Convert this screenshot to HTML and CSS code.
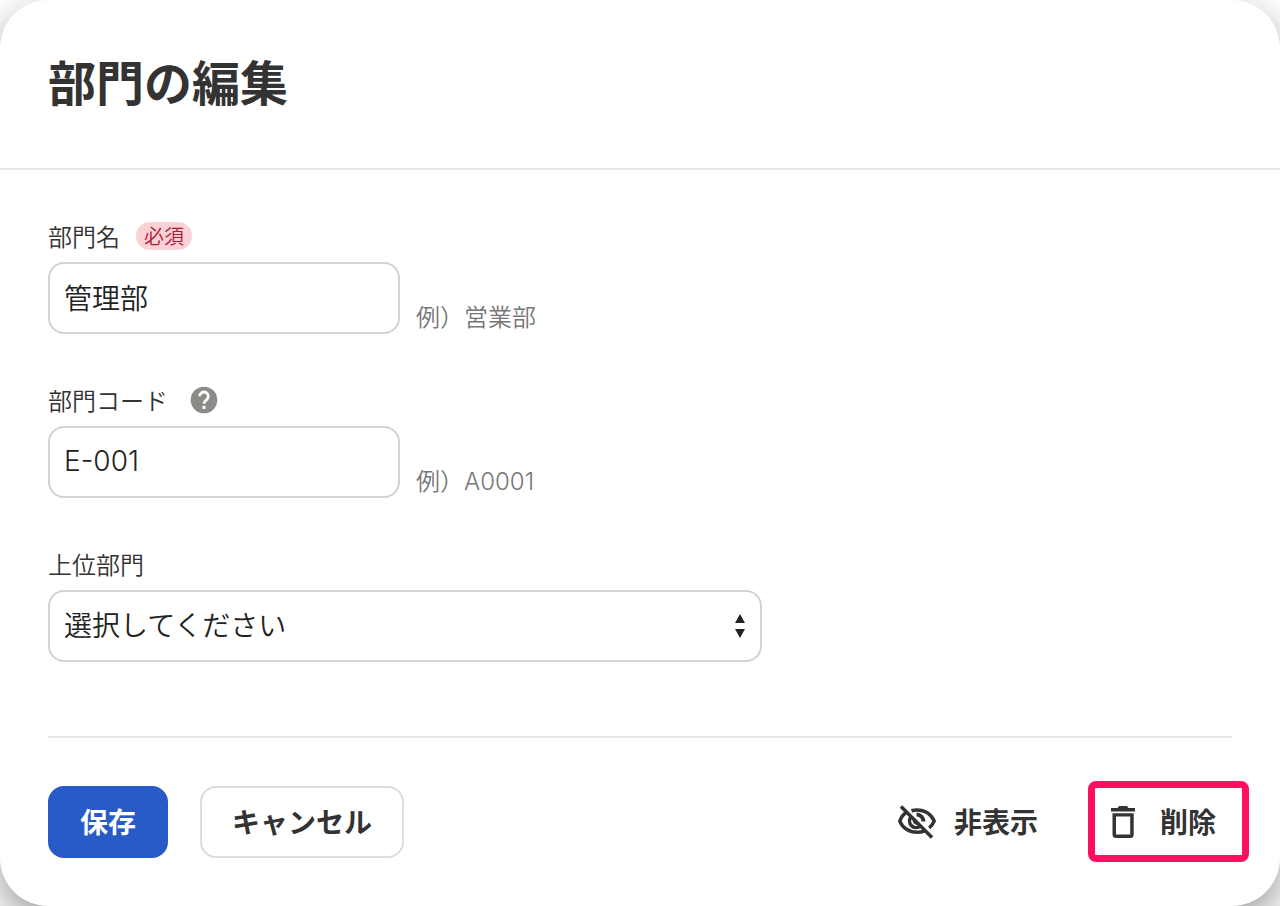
FILE: index.html
```html
<!DOCTYPE html>
<html lang="ja">
<head>
    <meta charset="UTF-8">
    <meta name="viewport" content="width=device-width, initial-scale=1.0">
    <title>部門の編集</title>
    <link rel="stylesheet" href="styles.css">
</head>
<body>

    <div class="dialog">
        <div class="dialog-header">
            <h1>部門の編集</h1>
        </div>

        <form class="dialog-body">
            <div class="field">
                <div class="field-label">
                    <label for="name">部門名</label>
                    <span class="required">必須</span>
                </div>
                <div class="field-row">
                    <input class="control" type="text" id="name" value="管理部">
                    <span class="example">例）営業部</span>
                </div>
            </div>

            <div class="field">
                <div class="field-label">
                    <label for="code">部門コード</label>
                    <button type="button" class="help" aria-label="ヘルプ">
                        <svg width="28" height="28" viewBox="0 0 28 28">
                            <circle cx="14" cy="14" r="13.3" fill="#8c8b88"/>
                            <path d="M9.700 10.300a4.300 4.300 0 1 1 7.200 3.200c-1.700 1.500-2.900 2.100-2.900 4.300" fill="none" stroke="#fff" stroke-width="2.800"/>
                            <rect x="12.500" y="19.900" width="3" height="3" fill="#fff"/>
                        </svg>
                    </button>
                </div>
                <div class="field-row">
                    <input class="control" type="text" id="code" value="E-001">
                    <span class="example">例）A0001</span>
                </div>
            </div>

            <div class="field">
                <div class="field-label">
                    <label for="parent">上位部門</label>
                </div>
                <div class="select-wrap">
                    <select class="control" id="parent">
                        <option>選択してください</option>
                    </select>
                    <svg class="arrows" width="12" height="24" viewBox="0 0 12 24">
                        <path d="M6 0l5 9H1zM6 24l5-9H1z" fill="#222"/>
                    </svg>
                </div>
            </div>

            <div class="actions">
                <button type="submit" class="btn btn-primary">保存</button>
                <button type="button" class="btn btn-cancel">キャンセル</button>
                <div class="sub-actions">
                    <button type="button" class="btn-text">
                        <svg width="40" height="40" viewBox="0 0 40 40" fill="none" stroke="#333" stroke-width="3.500">
                            <path d="M9.500 9.500C5.500 12 3 15.500 1.800 19.100 4.500 26 11.200 30.300 19 30.300c3 0 5.700-.6 8.200-1.700M13.500 8.800c1.700-.5 3.500-.8 5.500-.8 7.800 0 14.300 4.300 17.200 11.100-1.100 2.600-2.800 4.900-5 6.700"/>
                            <path d="M12.800 15a6.700 6.700 0 0 0 9.800 9"/>
                            <path d="M18.500 12.500a7 7 0 0 1 7 7" stroke-width="4"/>
                            <path d="M15 17.500a4 4 0 0 0 5 5z" fill="#333" stroke="none"/>
                            <path d="M3 4.500l31 31"/>
                        </svg>
                        非表示
                    </button>
                    <button type="button" class="btn-text btn-delete">
                        <svg width="40" height="40" viewBox="0 0 40 40" fill="#333">
                            <path d="M7 6h6.500l1.500-2h8l1.500 2H31v3.500H7z"/>
                            <path fill-rule="evenodd" d="M8.500 11.300h21.200v21.200q0 3.500-3.500 3.500H12q-3.500 0-3.500-3.500zM12 14.600v17.900h14.200V14.600z"/>
                        </svg>
                        削除
                    </button>
                </div>
            </div>
        </form>
    </div>

</body>
</html>
```

FILE: styles.css
```css
* {
    box-sizing: border-box;
}

body {
    margin: 0;
    background-color: #fff;
    color: #333;
    font-family: Inter, "Noto Sans CJK JP", sans-serif;
    font-weight: 350;
}

button, input, select {
    font: inherit;
    color: inherit;
}

.dialog {
    background-color: #fff;
    border-radius: 48px;
    box-shadow: 0 16px 40px rgba(0, 0, 0, 0.4);
}

.dialog-header {
    padding: 48px;
    border-bottom: 2px solid #e6e6e6;
}

h1 {
    margin: 0;
    font-size: 48px;
    line-height: 72px;
    font-weight: 700;
}

.dialog-body {
    padding: 52px 48px 48px;
}

.field {
    margin-bottom: 52px;
}

.field-label {
    display: flex;
    align-items: center;
    gap: 16px;
    height: 28px;
    margin-bottom: 12px;
    font-size: 24px;
    line-height: 28px;
}

.field-label label {
    padding-top: 4px;
}

.required {
    padding: 2px 8px 0;
    border-radius: 14px;
    background-color: #fbd1d8;
    color: #b01b37;
    font-size: 20px;
    line-height: 26px;
}

.help {
    display: flex;
    margin-left: 6px;
    padding: 0;
    border: none;
    background: none;
}

.field-row {
    display: flex;
    align-items: flex-end;
    gap: 16px;
}

.control {
    width: 352px;
    height: 72px;
    padding: 0 14px;
    border: 2px solid #d6d1d2;
    border-radius: 16px;
    background-color: #fff;
    color: #222;
    font-size: 28px;
}

input.control {
    padding-bottom: 2px;
}

.example {
    color: #777;
    font-size: 24px;
    line-height: 32px;
}

.select-wrap {
    position: relative;
    max-width: 714px;
}

.select-wrap .control {
    display: block;
    width: 100%;
    appearance: none;
}

.arrows {
    position: absolute;
    top: 24px;
    right: 16px;
    pointer-events: none;
}

.actions {
    display: flex;
    align-items: center;
    gap: 32px;
    margin-top: 74px;
    padding-top: 48px;
    border-top: 2px solid #e6e6e6;
}

.btn {
    height: 72px;
    padding: 0 30px 3px;
    border: 2px solid #dcdcdc;
    border-radius: 16px;
    background-color: #fff;
    font-size: 28px;
    font-weight: 700;
}

.btn-primary {
    border-color: #285ac8;
    background-color: #285ac8;
    color: #fff;
}

.sub-actions {
    display: flex;
    gap: 50px;
    margin-left: auto;
}

.btn-text {
    display: flex;
    align-items: center;
    gap: 16px;
    height: 72px;
    padding: 0 16px 2px 0;
    border: none;
    background: none;
    font-size: 28px;
    font-weight: 700;
}

.btn-text svg {
    margin-top: 2px;
}

.btn-delete {
    position: relative;
}

/* highlight frame around the delete button */
.btn-delete::after {
    content: "";
    position: absolute;
    inset: -5px -17px -4px -16px;
    border: 7px solid #ff0f5f;
    border-radius: 8px;
}
```
